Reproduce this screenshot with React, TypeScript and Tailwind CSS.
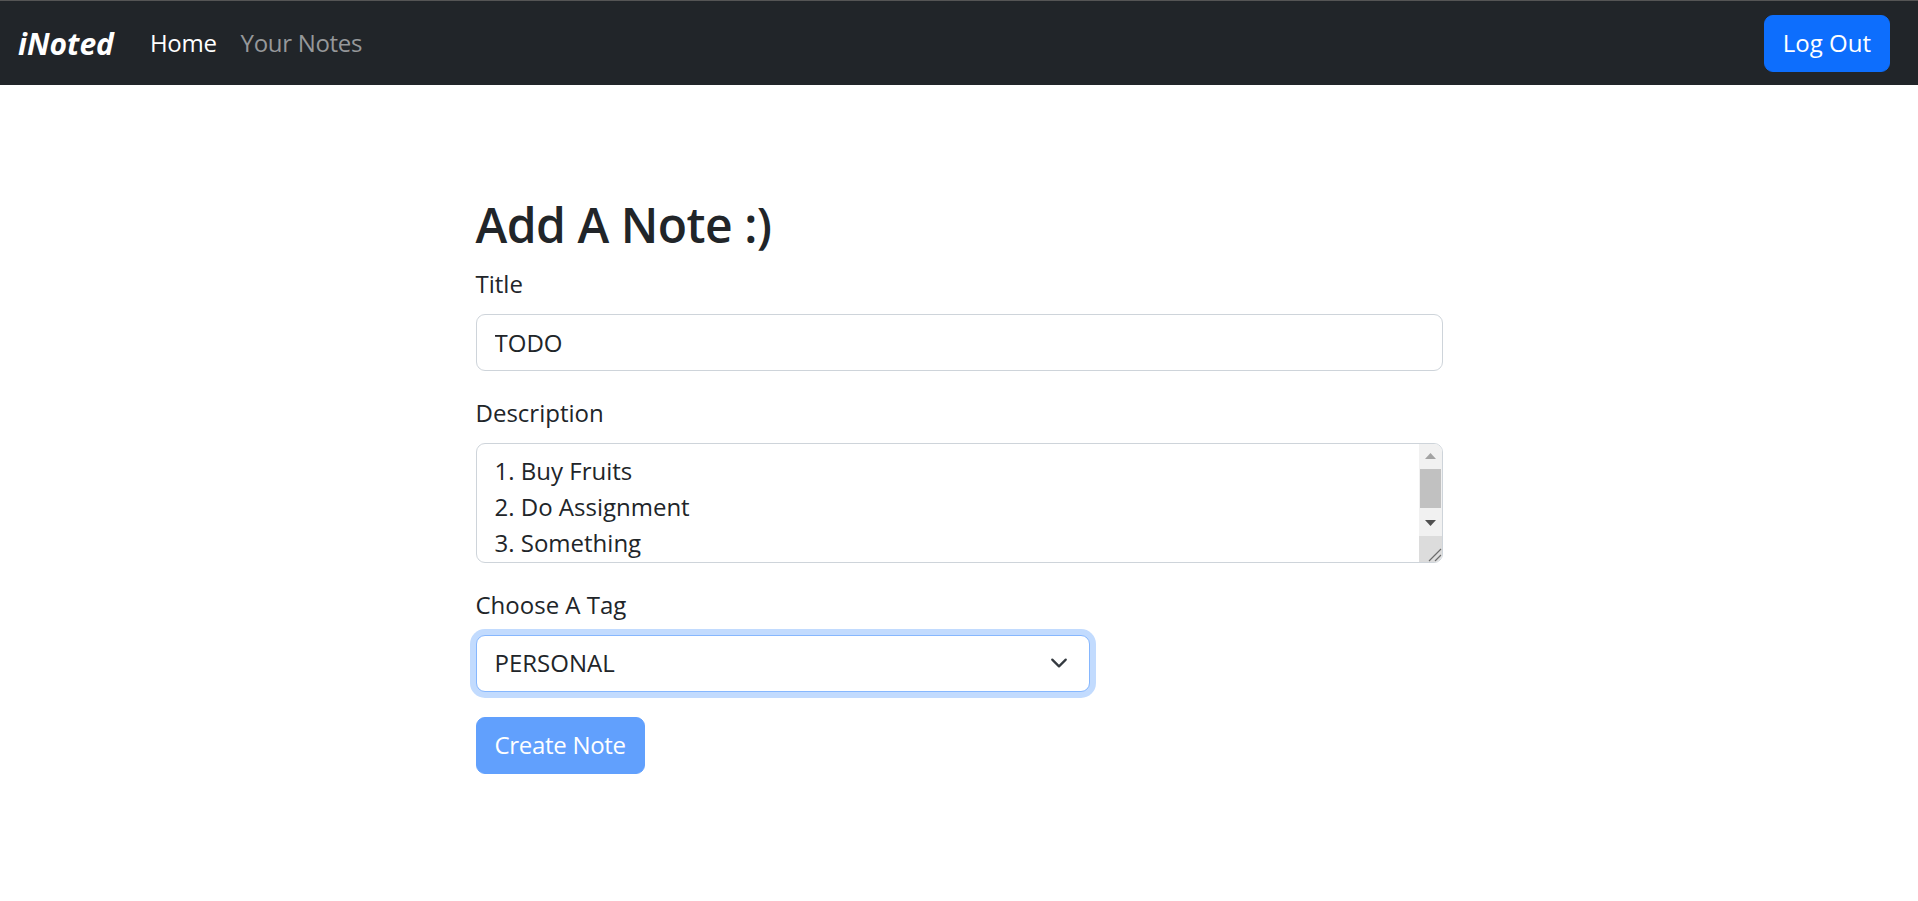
import React from 'react';

const FONT = "font-['Segoe_UI','Open_Sans','Noto_Sans',sans-serif]";

const NavBar: React.FC = () => (
  <nav className="flex h-[85px] items-center justify-between border-t border-[#555] bg-[#212529] pl-[18px] pr-[28px]">
    <div className="flex items-center">
      <a href="#" className="mr-[24px] text-[30px] font-bold italic leading-[45px] text-white">
        iNoted
      </a>
      <ul className="flex items-center">
        <li>
          <a href="#" className="block px-[12px] py-[12px] text-[24px] leading-[36px] tracking-[-0.3px] text-white">
            Home
          </a>
        </li>
        <li>
          <a href="#" className="block px-[12px] py-[12px] text-[24px] leading-[36px] tracking-[-0.3px] text-[#96989a]">
            Your Notes
          </a>
        </li>
      </ul>
    </div>
    <button className="h-[57px] rounded-[9px] border border-[#0d6efd] bg-[#0d6efd] px-[18px] text-[24px] leading-[36px] text-white">
      Log Out
    </button>
  </nav>
);

// fake windows-style scrollbar column beside the textarea
const ScrollColumn: React.FC = () => (
  <div className="flex w-[23px] flex-col bg-[#f1f1f1]">
    <div className="flex h-[25px] items-center justify-center">
      <svg width="11" height="6" viewBox="0 0 11 6">
        <path d="M0 6 L5.5 0 L11 6 Z" fill="#a3a3a3" />
      </svg>
    </div>
    <div className="mx-[1px] h-[39px] bg-[#c1c1c1]" />
    <div className="flex-1" />
    <div className="flex h-[25px] items-center justify-center">
      <svg width="11" height="6" viewBox="0 0 11 6">
        <path d="M0 0 L11 0 L5.5 6 Z" fill="#505050" />
      </svg>
    </div>
    <div className="h-[26px] bg-[#dcdcdc]">
      <svg width="23" height="26" viewBox="0 0 23 26">
        <path d="M10 25 L22 13 M16 25 L22 19" stroke="#6b6b6b" strokeWidth="1.2" fill="none" />
      </svg>
    </div>
  </div>
);

const Label: React.FC<{ text: string }> = ({ text }) => (
  <label className="mb-[12px] block text-[24px] leading-[36px]">{text}</label>
);

export default function App() {
  return (
    <div className={`min-h-screen bg-white text-[#212529] ${FONT}`}>
      <NavBar />
      <main className="mx-auto w-[967px] pt-[111px]">
        <h2 className="mb-[12px] text-[48px] font-semibold leading-[57.6px] tracking-[-0.5px]">Add A Note :)</h2>

        <div className="mb-[24px]">
          <Label text="Title" />
          <input
            type="text"
            defaultValue="TODO"
            className="block h-[57px] w-full rounded-[9px] border border-[#ced4da] px-[18px] text-[24px] leading-[36px] outline-none"
          />
        </div>

        <div className="mb-[24px]">
          <Label text="Description" />
          <div className="flex h-[120px] overflow-hidden rounded-[9px] border border-[#ced4da] bg-white">
            <textarea
              defaultValue={'1. Buy Fruits\n2. Do Assignment\n3. Something'}
              className="flex-1 resize-none overflow-hidden px-[18px] py-[9px] text-[24px] leading-[36px] outline-none"
            />
            <ScrollColumn />
          </div>
        </div>

        <div className="mb-[25px]">
          <Label text="Choose A Tag" />
          <div className="flex h-[57px] w-[614px] items-center rounded-[9px] border border-[#86b7fe] bg-white pr-[18px] shadow-[0_0_0_6px_rgba(13,110,253,0.25)]">
            <select
              defaultValue="PERSONAL"
              className="h-full flex-1 appearance-none bg-transparent pl-[18px] text-[24px] leading-[36px] text-[#212529] outline-none"
            >
              <option>PERSONAL</option>
              <option>WORK</option>
              <option>GENERAL</option>
            </select>
            <svg width="24" height="18" viewBox="0 0 16 16">
              <path
                d="m2 5 6 6 6-6"
                fill="none"
                stroke="#343a40"
                strokeWidth="2"
                strokeLinecap="round"
                strokeLinejoin="round"
              />
            </svg>
          </div>
        </div>

        <button className="h-[57px] rounded-[9px] border border-[#0d6efd] bg-[#0d6efd] px-[18px] text-[24px] leading-[36px] tracking-[-0.3px] text-white opacity-[0.65]">
          Create Note
        </button>
      </main>
    </div>
  );
}
